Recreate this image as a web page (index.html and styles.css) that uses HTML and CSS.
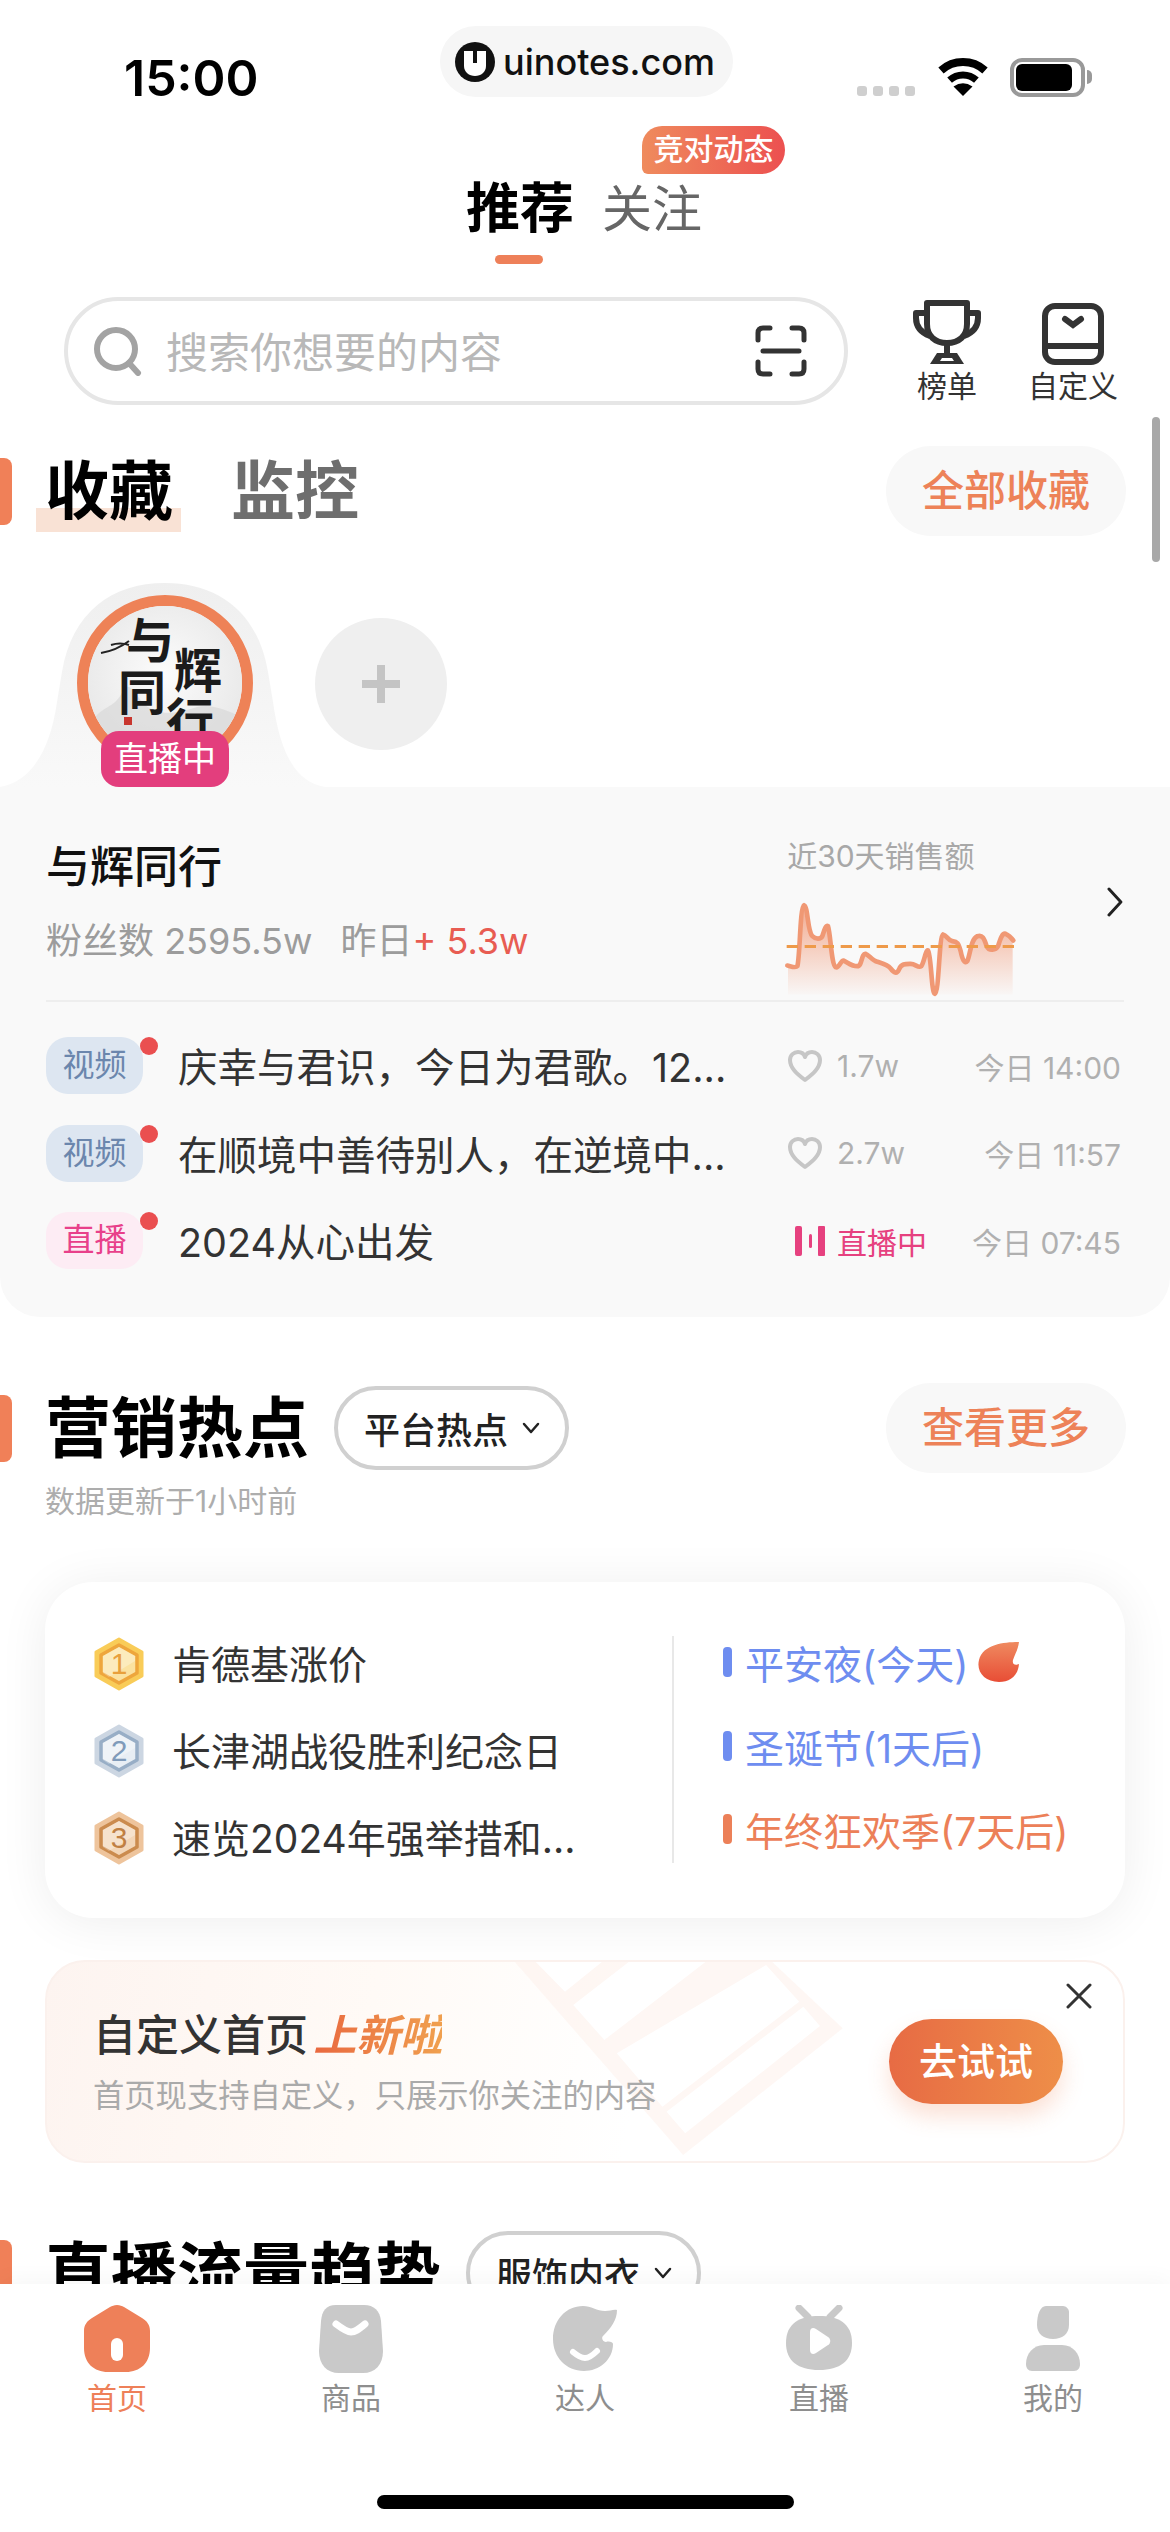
FILE: index.html
```html
<!DOCTYPE html>
<html lang="zh-CN">

<head>
    <meta charset="UTF-8">
    <meta name="viewport" content="width=device-width, initial-scale=1.0">
    <title>首页</title>
    <link rel="stylesheet" href="styles.css">
</head>

<body>
    <div class="app">
        <div class="main">
            <!-- 状态栏 -->
            <div class="status">
                <div class="time">15:00</div>
                <div class="watermark">
                    <svg class="wm-logo" viewBox="0 0 40 40">
                        <circle cx="20" cy="20" r="20" fill="#111" />
                        <path d="M9 9H31V24C31 30 26 34 20 34C14 34 9 30 9 24Z" fill="#fff" />
                        <path d="M18 9H22V21H18Z" fill="#111" />
                    </svg>
                    <span>uinotes.com</span>
                </div>
                <div class="status-right">
                    <div class="signal"><i></i><i></i><i></i><i></i></div>
                    <svg class="wifi" width="50" height="38" viewBox="0 0 50 38">
                        <path d="M3 12.5A33 33 0 0 1 47 12.5" fill="none" stroke="#000" stroke-width="8" />
                        <path d="M11.6 22.1A20 20 0 0 1 38.4 22.1" fill="none" stroke="#000" stroke-width="7" />
                        <path d="M25 38L15.5 28.500Q25 22 34.500 28.500Z" fill="#000" />
                    </svg>
                    <div class="battery"><i></i></div>
                    <div class="battery-tip"></div>
                </div>
            </div>

            <!-- 顶部tab -->
            <div class="tabs">
                <div class="tab active">推荐</div>
                <div class="tab">关注</div>
                <div class="tab-badge">竞对动态</div>
            </div>

            <!-- 搜索 -->
            <div class="search-row">
                <div class="search">
                    <svg width="50" height="50" viewBox="0 0 50 50" fill="none" stroke="#a3a3a3" stroke-width="6">
                        <circle cx="23" cy="23" r="19" />
                        <path d="M36 37L45 47" stroke-linecap="round" />
                    </svg>
                    <span class="placeholder">搜索你想要的内容</span>
                    <svg class="scan" width="52" height="52" viewBox="0 0 52 52" fill="none" stroke="#333" stroke-width="5" stroke-linecap="round">
                        <path d="M3 15V8Q3 3 8 3H15M37 3H44Q49 3 49 8V15M3 37V44Q3 49 8 49H15M37 49H44Q49 49 49 44V37M8 26H44" />
                    </svg>
                </div>
                <div class="tools">
                    <div class="tool">
                        <svg width="68" height="66" viewBox="0 0 68 66" fill="none" stroke="#333" stroke-width="6" stroke-linejoin="round">
                            <path d="M14 3H54V24C54 36 46 43 34 43C22 43 14 36 14 24Z" />
                            <path d="M14 13H3V18C3 27 9 33 17 36M54 13H65V18C65 27 59 33 51 36M34 43V53" />
                            <path d="M24 53H44L51 64H17Z" fill="#333" stroke="none" />
                            <path d="M29 58H39L41 61H27Z" fill="#fff" stroke="none" />
                        </svg>
                        <span>榜单</span>
                    </div>
                    <div class="tool">
                        <svg width="66" height="66" viewBox="0 0 66 66" fill="none" stroke="#333" stroke-width="6">
                            <rect x="5" y="6" width="56" height="56" rx="10" />
                            <path d="M5 46H61" />
                            <path d="M25 19L33 25L41 19" stroke-width="6" stroke-linecap="round" />
                        </svg>
                        <span>自定义</span>
                    </div>
                </div>
            </div>

            <!-- 收藏 -->
            <div class="sec-head sec-collect">
                <div class="mark"></div>
                <div class="title-on">收藏</div>
                <div class="title-off">监控</div>
                <div class="more">全部收藏</div>
            </div>
            <div class="scroll-bar"></div>

            <div class="avatars">
                <svg class="bell" width="330" height="210" viewBox="0 0 330 210">
                    <defs>
                        <linearGradient id="bellBg" x1="0" y1="0" x2="0" y2="1">
                            <stop offset="0" stop-color="#efefef" />
                            <stop offset="1" stop-color="#f9f9f9" />
                        </linearGradient>
                    </defs>
                    <path d="M0 210C30 205 50 175 57 125L62 95C72 35 112 6 165 6C218 6 258 35 268 95L273 125C280 175 295 205 325 210Z" fill="url(#bellBg)" />
                </svg>
                <div class="avatar">
                    <svg class="avatar-art" width="154" height="154" viewBox="11 11 154 154">
                        <defs>
                            <radialGradient id="artBg" cx="0.5" cy="0.45" r="0.6">
                                <stop offset="0" stop-color="#fcfcfc" />
                                <stop offset="1" stop-color="#e4e4e4" />
                            </radialGradient>
                        </defs>
                        <rect x="0" y="0" width="176" height="176" fill="url(#artBg)" />
                        <path d="M20 120C30 110 38 112 46 96C52 84 58 100 68 110C84 122 100 118 120 112C136 108 150 116 170 124V176H10V130Z" fill="#d9d9d9" opacity="0.7" />
                        <path d="M24 58C36 56 44 52 52 46M34 50C40 48 46 48 52 50" fill="none" stroke="#222" stroke-width="2" />
                        <text class="art-t" x="73" y="63" font-size="48">与</text>
                        <text class="art-t" x="121" y="93" font-size="48">辉</text>
                        <text class="art-t" x="65" y="115" font-size="48">同</text>
                        <text class="art-t" x="113" y="143" font-size="48">行</text>
                        <rect x="47" y="122" width="8" height="8" fill="#c8362e" />
                    </svg>
                    <div class="live-badge">直播中</div>
                </div>
                <div class="add">
                    <svg width="38" height="38" viewBox="0 0 38 38" fill="#c4c4c4">
                        <rect x="0" y="15" width="38" height="8" />
                        <rect x="15" y="0" width="8" height="38" />
                    </svg>
                </div>
            </div>

            <div class="fav-card">
                <div class="fav-top">
                    <div class="fav-left">
                        <div class="fav-name">与辉同行</div>
                        <div class="fav-sub">
                            <span>粉丝数 2595.5w</span>
                            <span class="yesterday">昨日<em>+ 5.3w</em></span>
                        </div>
                    </div>
                    <div class="fav-chart">
                        <div class="chart-label">近30天销售额</div>
                        <svg width="234" height="97" viewBox="80 210 702 290">
                            <defs>
                                <linearGradient id="areaBg" x1="0" y1="0" x2="0" y2="1">
                                    <stop offset="0" stop-color="#f19c7c" stop-opacity="0.85" />
                                    <stop offset="1" stop-color="#f19c7c" stop-opacity="0.03" />
                                </linearGradient>
                            </defs>
                            <path d="M92 403C100 405 115 412 120 405C128 380 128 225 140 222C152 225 150 300 165 315C175 325 190 325 195 315C200 300 205 280 212 285C220 310 222 400 235 408C245 412 250 388 258 388C270 392 280 405 300 405C315 405 312 365 325 368C335 372 345 388 360 392C375 397 390 400 400 412C410 425 418 430 425 415C432 397 445 398 460 398C475 398 482 412 492 405C500 395 505 355 512 358C522 370 522 490 533 488C545 485 545 315 557 310C568 312 572 328 585 330C600 332 603 335 610 360C615 385 622 400 630 390C640 365 640 325 660 315C675 310 680 320 688 345C695 360 715 358 722 345C730 320 735 305 745 308C755 312 762 320 766 328V490H92Z" fill="url(#areaBg)" />
                            <path d="M90 403C100 405 115 412 120 405C128 380 128 225 140 222C152 225 150 300 165 315C175 325 190 325 195 315C200 300 205 280 212 285C220 310 222 400 235 408C245 412 250 388 258 388C270 392 280 405 300 405C315 405 312 365 325 368C335 372 345 388 360 392C375 397 390 400 400 412C410 425 418 430 425 415C432 397 445 398 460 398C475 398 482 412 492 405C500 395 505 355 512 358C522 370 522 490 533 488C545 485 545 315 557 310C568 312 572 328 585 330C600 332 603 335 610 360C615 385 622 400 630 390C640 365 640 325 660 315C675 310 680 320 688 345C695 360 715 358 722 345C730 320 735 305 745 308C755 312 762 320 768 328" fill="none" stroke="#f09874" stroke-width="14" stroke-linecap="round" />
                            <path d="M88 346H772" fill="none" stroke="#ee9a4a" stroke-width="9" stroke-dasharray="34 20" />
                        </svg>
                    </div>
                    <svg class="chevron" width="18" height="30" viewBox="0 0 18 30" fill="none" stroke="#222" stroke-width="3" stroke-linecap="round" stroke-linejoin="round">
                        <path d="M3 2L15 15L3 28" />
                    </svg>
                </div>
                <div class="fav-list">
                    <div class="fav-row">
                        <div class="tag tag-video">视频</div>
                        <div class="row-title">庆幸与君识，今日为君歌。12...</div>
                        <div class="row-like">
                            <svg width="36" height="36" viewBox="0 0 36 36" fill="none" stroke="#c6c6c6" stroke-width="4" stroke-linejoin="round">
                                <path d="M18 32C10 26 3 20 3 12C3 7 7 4 11 4C14 4 17 6 18 9C19 6 22 4 25 4C29 4 33 7 33 12C33 20 26 26 18 32Z" />
                            </svg>
                            <span>1.7w</span>
                        </div>
                        <div class="row-time">今日 14:00</div>
                    </div>
                    <div class="fav-row">
                        <div class="tag tag-video">视频</div>
                        <div class="row-title">在顺境中善待别人，在逆境中...</div>
                        <div class="row-like">
                            <svg width="36" height="36" viewBox="0 0 36 36" fill="none" stroke="#c6c6c6" stroke-width="4" stroke-linejoin="round">
                                <path d="M18 32C10 26 3 20 3 12C3 7 7 4 11 4C14 4 17 6 18 9C19 6 22 4 25 4C29 4 33 7 33 12C33 20 26 26 18 32Z" />
                            </svg>
                            <span>2.7w</span>
                        </div>
                        <div class="row-time">今日 11:57</div>
                    </div>
                    <div class="fav-row">
                        <div class="tag tag-live">直播</div>
                        <div class="row-title">2024从心出发</div>
                        <div class="row-like row-live">
                            <svg width="30" height="30" viewBox="0 0 30 30" fill="#e6417f">
                                <rect x="0" y="0" width="7" height="30" rx="2" />
                                <rect x="14" y="8" width="3" height="14" rx="1.500" />
                                <rect x="23" y="0" width="7" height="30" rx="1" />
                            </svg>
                            <span>直播中</span>
                        </div>
                        <div class="row-time">今日 07:45</div>
                    </div>
                </div>
            </div>

            <!-- 营销热点 -->
            <div class="sec-head sec-hot">
                <div class="mark"></div>
                <div class="title-on plain">营销热点</div>
                <div class="drop">
                    <span>平台热点</span>
                    <svg width="18" height="12" viewBox="0 0 18 12" fill="none" stroke="#222" stroke-width="2.500" stroke-linecap="round" stroke-linejoin="round">
                        <path d="M2 2L9 10L16 2" />
                    </svg>
                </div>
                <div class="more">查看更多</div>
            </div>
            <div class="update-time">数据更新于1小时前</div>

            <div class="hot-card">
                <div class="hot-left">
                    <div class="hot-row">
                        <svg class="medal" width="50" height="54" viewBox="0 0 50 54">
                            <path d="M25 2L48 15V39L25 52L2 39V15Z" fill="#f9cc58" stroke="#f9cc58" stroke-width="3" stroke-linejoin="round" />
                            <path d="M25 8L43 18V36L25 46L7 36V18Z" fill="#fbe2a0" stroke="#eea63c" stroke-width="3.500" stroke-linejoin="round" />
                            <path d="M25 10L41 19V24L15 40L9 36V19Z" fill="#fff" opacity="0.3" />
                            <text x="25" y="37" fill="#e8a03c">1</text>
                        </svg>
                        <span>肯德基涨价</span>
                    </div>
                    <div class="hot-row">
                        <svg class="medal" width="50" height="54" viewBox="0 0 50 54">
                            <path d="M25 2L48 15V39L25 52L2 39V15Z" fill="#ccd6e2" stroke="#ccd6e2" stroke-width="3" stroke-linejoin="round" />
                            <path d="M25 8L43 18V36L25 46L7 36V18Z" fill="#e8eef4" stroke="#98aec6" stroke-width="3.500" stroke-linejoin="round" />
                            <path d="M25 10L41 19V24L15 40L9 36V19Z" fill="#fff" opacity="0.3" />
                            <text x="25" y="37" fill="#809bba">2</text>
                        </svg>
                        <span>长津湖战役胜利纪念日</span>
                    </div>
                    <div class="hot-row">
                        <svg class="medal" width="50" height="54" viewBox="0 0 50 54">
                            <path d="M25 2L48 15V39L25 52L2 39V15Z" fill="#eec49c" stroke="#eec49c" stroke-width="3" stroke-linejoin="round" />
                            <path d="M25 8L43 18V36L25 46L7 36V18Z" fill="#f3d6b8" stroke="#cb8b4e" stroke-width="3.500" stroke-linejoin="round" />
                            <path d="M25 10L41 19V24L15 40L9 36V19Z" fill="#fff" opacity="0.3" />
                            <text x="25" y="37" fill="#c07f42">3</text>
                        </svg>
                        <span>速览2024年强举措和...</span>
                    </div>
                </div>
                <div class="hot-line"></div>
                <div class="hot-right">
                    <div class="fest fest-blue"><i></i><span>平安夜(今天)</span>
                        <svg class="fire" width="42" height="40" viewBox="0 0 42 40">
                            <defs>
                                <linearGradient id="fireBg" x1="0" y1="0" x2="0" y2="1">
                                    <stop offset="0" stop-color="#ef8a60" />
                                    <stop offset="1" stop-color="#e84d35" />
                                </linearGradient>
                            </defs>
                            <path d="M42 0C28 0 6 2 2 18C-1 30 8 40 22 40C33 40 41 34 42 22C38 24 35 22 36 18C38 12 41 8 42 0Z" fill="url(#fireBg)" />
                        </svg>
                    </div>
                    <div class="fest fest-blue"><i></i><span>圣诞节(1天后)</span></div>
                    <div class="fest fest-orange"><i></i><span>年终狂欢季(7天后)</span></div>
                </div>
            </div>

            <div class="banner">
                <svg class="banner-deco" width="650" height="220" viewBox="0 0 1568 660" preserveAspectRatio="none">
                    <path d="M80 30L490 615L875 235L700 30Z" fill="#fdf1ec" opacity="0.6" />
                    <path d="M130 30H300L205 125Z" fill="#fff" />
                    <path d="M225 165L365 30H550L300 270Z" fill="#fff" />
                    <path d="M330 310L690 45L770 155L440 470Z" fill="#fff" />
                    <path d="M450 485L780 170L820 228L495 550Z" fill="#fff" />
                </svg>
                <div class="banner-text">
                    <div class="banner-title">自定义首页 <em>上新啦</em></div>
                    <div class="banner-sub">首页现支持自定义，只展示你关注的内容</div>
                </div>
                <div class="try-btn">去试试</div>
                <svg class="close" width="26" height="26" viewBox="0 0 26 26" fill="none" stroke="#333" stroke-width="3" stroke-linecap="round">
                    <path d="M2 2L24 24M24 2L2 24" />
                </svg>
            </div>

            <!-- 直播流量趋势 -->
            <div class="sec-head sec-trend">
                <div class="mark"></div>
                <div class="title-on plain">直播流量趋势</div>
                <div class="drop">
                    <span>服饰内衣</span>
                    <svg width="18" height="12" viewBox="0 0 18 12" fill="none" stroke="#222" stroke-width="2.500" stroke-linecap="round" stroke-linejoin="round">
                        <path d="M2 2L9 10L16 2" />
                    </svg>
                </div>
            </div>
        </div>

        <!-- 底部导航 -->
        <div class="tabbar">
            <div class="nav">
                <div class="nav-item active">
                    <svg width="66" height="68" viewBox="0 0 66 68">
                        <path d="M33 0C36 0 38 1 40 2L58 13C63 16 66 20 66 26V43C66 58 56 67 42 67H24C10 67 0 58 0 43V26C0 20 3 16 8 13L26 2C28 1 30 0 33 0Z" fill="#ee8059" />
                        <rect x="27" y="33" width="12" height="23" rx="6" fill="#fff" />
                    </svg>
                    <span>首页</span>
                </div>
                <div class="nav-item">
                    <svg width="66" height="68" viewBox="0 0 66 68">
                        <path d="M18 0H46C56 0 62 6 63 16L65 46C65 60 57 68 45 68H21C9 68 1 60 1 46L3 16C4 6 8 0 18 0Z" fill="#c9c9c9" />
                        <path d="M18 19C26 25 30 27 33 27C37 27 40 25 47 19" fill="none" stroke="#fff" stroke-width="7" stroke-linecap="round" />
                    </svg>
                    <span>商品</span>
                </div>
                <div class="nav-item">
                    <svg width="66" height="68" viewBox="0 0 66 68">
                        <path d="M31 1C39 1 45 6 53 6C58 6 62 4 65 5C65 15 59 23 51 31C49 33 51 37 54 37C57 36 61 37 61 39C61 55 47 66 32 66C14 66 1 52 1 34C1 15 14 1 31 1Z" fill="#c9c9c9" />
                        <path d="M21 47C27 52 30 53 33 53C37 53 40 51 45 46" fill="none" stroke="#fff" stroke-width="6" stroke-linecap="round" />
                    </svg>
                    <span>达人</span>
                </div>
                <div class="nav-item">
                    <svg width="66" height="68" viewBox="0 0 66 68">
                        <path d="M13 3L22 12M53 3L44 12" fill="none" stroke="#c9c9c9" stroke-width="7" stroke-linecap="round" />
                        <path d="M33 11C52 11 66 18 66 38C66 56 54 65 33 65C12 65 0 56 0 38C0 18 14 11 33 11Z" fill="#c9c9c9" />
                        <path d="M24 27C24 23 27 22 30 24L42 32C45 34 45 38 42 40L30 48C27 50 24 49 24 45Z" fill="#fff" />
                    </svg>
                    <span>直播</span>
                </div>
                <div class="nav-item">
                    <svg width="56" height="68" viewBox="0 0 56 68">
                        <path d="M21 1H38C41 1 44 4 44 7V20C44 29 37 34 28 34C19 34 12 29 12 20C12 10 15 1 21 1Z" fill="#c9c9c9" />
                        <path d="M19 40H37C48 40 55 49 55 59C55 63 53 66 49 66H7C3 66 1 63 1 59C1 49 8 40 19 40Z" fill="#c9c9c9" />
                    </svg>
                    <span>我的</span>
                </div>
            </div>
            <div class="home-bar"></div>
        </div>
    </div>
</body>

</html>
```

FILE: styles.css
```css
* {
    margin: 0;
    padding: 0;
    box-sizing: border-box;
}

body {
    font-family: Inter, "Noto Sans CJK SC", sans-serif;
    color: #222;
    background: #fff;
}

em,
i {
    font-style: normal;
}

.app {
    position: relative;
    width: 1170px;
    height: 2532px;
    display: flex;
    flex-direction: column;
    overflow: hidden;
}

.main {
    height: 2284px;
    overflow: hidden;
    flex-shrink: 0;
}

/* status */
.status {
    position: relative;
    height: 126px;
    display: flex;
    padding: 49px 78px 0 124px;
}

.time {
    font-size: 50px;
    line-height: 58px;
    font-weight: 600;
    color: #000;
}

.watermark {
    position: absolute;
    left: 440px;
    top: 26px;
    width: 293px;
    height: 71px;
    border-radius: 36px;
    background: #f6f6f6;
    display: flex;
    align-items: center;
    padding-left: 15px;
    gap: 8px;
    font-size: 36px;
    font-weight: 500;
    color: #111;
}

.wm-logo {
    width: 40px;
    height: 40px;
}

.status-right {
    margin-left: auto;
    height: 39px;
    margin-top: 9px;
    display: flex;
    align-items: flex-start;
}

.signal {
    display: flex;
    gap: 6px;
    margin-top: 28px;
}

.signal i {
    width: 10px;
    height: 10px;
    border-radius: 3px;
    background: #cfcfcf;
}

.wifi {
    margin-left: 23px;
}

.battery {
    width: 75px;
    height: 39px;
    margin-left: 22px;
    border: 4px solid #999;
    border-radius: 12px;
    padding: 2px;
}

.battery i {
    display: block;
    width: 56px;
    height: 27px;
    border-radius: 6px;
    background: #000;
}

.battery-tip {
    width: 5px;
    height: 14px;
    margin: 12px 0 0 2px;
    border-radius: 0 6px 6px 0;
    background: #999;
}

/* tabs */
.tabs {
    position: relative;
    height: 171px;
    display: flex;
    align-items: flex-start;
    gap: 28px;
    padding: 52px 0 0 466px;
}

.tab {
    font-size: 50px;
    line-height: 62px;
    color: #666;
}

.tab.active {
    position: relative;
    font-size: 54px;
    font-weight: 700;
    color: #000;
}

.tab.active::after {
    content: "";
    position: absolute;
    left: 29px;
    top: 77px;
    width: 48px;
    height: 9px;
    border-radius: 5px;
    background: #ee8059;
}

.tab-badge {
    position: absolute;
    left: 642px;
    top: 0;
    width: 143px;
    height: 48px;
    border-radius: 20px 24px 24px 6px;
    background: linear-gradient(90deg, #ef8b5d, #ec5050);
    color: #fff;
    font-size: 30px;
    font-weight: 500;
    line-height: 46px;
    text-align: center;
}

/* search */
.search-row {
    display: flex;
    padding-left: 64px;
}

.search {
    width: 784px;
    height: 108px;
    border: 4px solid #e6e6e6;
    border-radius: 54px;
    display: flex;
    align-items: center;
    padding-left: 25px;
}

.placeholder {
    margin: 0 0 3px 23px;
    font-size: 42px;
    color: #b8b8b8;
}

.scan {
    margin-left: auto;
    margin-right: 37px;
}

.tools {
    display: flex;
    margin-left: 65px;
    gap: 47px;
    margin-top: 3px;
}

.tool {
    display: flex;
    flex-direction: column;
    align-items: center;
    font-size: 30px;
    line-height: 36px;
    color: #333;
}

.tool svg {
    margin-bottom: 2px;
}

/* section head */
.sec-head {
    display: flex;
    align-items: center;
    height: 90px;
    padding-right: 44px;
}

.sec-collect {
    margin-top: 41px;
}

.sec-hot {
    margin-top: 66px;
}

.sec-trend {
    margin-top: 65px;
}

.mark {
    width: 12px;
    height: 67px;
    margin-right: 33px;
    border-radius: 0 8px 8px 0;
    background: #f08058;
}

.title-on {
    position: relative;
    z-index: 0;
    font-size: 64px;
    line-height: 80px;
    font-weight: 700;
    color: #000;
}

.title-on.plain {
    font-size: 66px;
    font-weight: 700;
}

.title-on:not(.plain)::before {
    content: "";
    position: absolute;
    z-index: -1;
    left: -9px;
    right: -8px;
    bottom: -1px;
    height: 24px;
    background: #f9e2d5;
}

.title-off {
    margin-left: 58px;
    font-size: 64px;
    line-height: 80px;
    font-weight: 700;
    color: #6e6e6e;
}

.more {
    margin-left: auto;
    width: 240px;
    height: 90px;
    border-radius: 45px;
    background: #f8f8f8;
    color: #ed8258;
    font-size: 42px;
    font-weight: 500;
    line-height: 90px;
    text-align: center;
}

.scroll-bar {
    position: absolute;
    left: 1152px;
    top: 417px;
    width: 8px;
    height: 145px;
    border-radius: 4px;
    background: #a8a8a8;
}

/* avatars */
.avatars {
    position: relative;
    z-index: 0;
    height: 251px;
    display: flex;
    padding: 59px 0 0 77px;
}

.bell {
    position: absolute;
    z-index: -1;
    left: 0;
    bottom: 0;
}

.avatar {
    position: relative;
    width: 176px;
    height: 176px;
    border: 11px solid #ee8257;
    border-radius: 50%;
}

.avatar-art {
    display: block;
    border-radius: 50%;
}

.art-t {
    font-family: "Noto Sans CJK SC", sans-serif;
    font-weight: 700;
    text-anchor: middle;
    fill: #1b1b1b;
}

.live-badge {
    position: absolute;
    left: 13px;
    top: 125px;
    width: 128px;
    height: 56px;
    border-radius: 18px;
    background: #e33e7d;
    color: #fff;
    font-size: 34px;
    line-height: 56px;
    text-align: center;
}

.add {
    width: 132px;
    height: 132px;
    margin: 23px 0 0 62px;
    border-radius: 50%;
    background: #efefef;
    display: flex;
    align-items: center;
    justify-content: center;
}

/* favorite card */
.fav-card {
    background: #f9f9f9;
    border-radius: 0 0 40px 40px;
    padding: 0 46px 48px;
}

.fav-top {
    height: 215px;
    display: flex;
    border-bottom: 2px solid #eee;
}

.fav-left {
    width: 744px;
    padding-top: 58px;
}

.fav-name {
    font-size: 44px;
    line-height: 44px;
    font-weight: 500;
    color: #111;
}

.fav-sub {
    margin-top: 32px;
    font-size: 36px;
    line-height: 40px;
    color: #9c9c9c;
}

.yesterday {
    margin-left: 18px;
}

.yesterday em {
    color: #e85c52;
}

.fav-chart {
    width: 234px;
    padding-top: 54px;
}

.chart-label {
    margin-left: 3px;
    font-size: 30px;
    line-height: 30px;
    color: #a8a8a8;
}

.fav-chart svg {
    display: block;
    margin-top: 30px;
}

.chevron {
    margin: 100px 0 0 88px;
}

.fav-list {
    padding-top: 35px;
    display: flex;
    flex-direction: column;
    gap: 30.5px;
}

.fav-row {
    display: flex;
    align-items: center;
    height: 57px;
}

.tag {
    position: relative;
    width: 97px;
    height: 57px;
    border-radius: 22px;
    font-size: 32px;
    line-height: 55px;
    text-align: center;
}

.tag::after {
    content: "";
    position: absolute;
    left: 94px;
    top: 0;
    width: 18px;
    height: 18px;
    border-radius: 50%;
    background: #ea4f50;
}

.tag-video {
    background: #dde6f1;
    color: #6b86ad;
}

.tag-live {
    background: #fdecf4;
    color: #e8408a;
}

.row-title {
    width: 544px;
    margin: 0 0 2px 35px;
    font-size: 39.5px;
    color: #333;
    white-space: nowrap;
}

.row-like {
    display: flex;
    align-items: center;
    gap: 14px;
    margin-left: 65px;
    font-size: 30px;
    color: #b0b0b0;
}

.row-live {
    margin-left: 73px;
    gap: 12px;
    color: #e6417f;
    font-size: 30px;
}

.row-time {
    margin-left: auto;
    margin-right: 3px;
    font-size: 30px;
    color: #b0b0b0;
}

/* hot */
.update-time {
    margin: 13px 0 0 45px;
    font-size: 30px;
    line-height: 30px;
    color: #adadad;
}

.hot-card {
    width: 1080px;
    height: 336px;
    margin: 66px 0 0 45px;
    padding: 54px 0 0 49px;
    border-radius: 48px;
    background: #fff;
    box-shadow: 0 4px 50px rgba(0, 0, 0, 0.07);
    display: flex;
}

.hot-left {
    width: 578px;
    padding-top: 1px;
    display: flex;
    flex-direction: column;
    gap: 33px;
}

.hot-row {
    display: flex;
    align-items: center;
    height: 54px;
    gap: 28px;
    font-size: 39px;
    color: #333;
    white-space: nowrap;
}

.hot-row span {
    margin-bottom: 4px;
}

.medal text {
    font-family: "Liberation Sans", sans-serif;
    font-size: 30px;
    text-anchor: middle;
}

.hot-line {
    width: 2px;
    height: 227px;
    background: #e8e8e8;
}

.hot-right {
    margin-left: 49px;
    padding-top: 2px;
    display: flex;
    flex-direction: column;
    gap: 35.5px;
}

.fest {
    display: flex;
    align-items: center;
    height: 48px;
    font-size: 39px;
    white-space: nowrap;
}

.fest i {
    width: 9px;
    height: 30px;
    margin-right: 13px;
    border-radius: 4px;
}

.fest-blue {
    color: #6e8df0;
}

.fest-blue i {
    background: #6e8df0;
}

.fest-orange {
    color: #ec8058;
}

.fest-orange i {
    background: #ec8058;
}

.fire {
    margin-left: 9px;
}

/* banner */
.banner {
    position: relative;
    width: 1080px;
    height: 203px;
    margin: 42px 0 0 45px;
    border: 2px solid #fbf1ed;
    border-radius: 40px;
    background: linear-gradient(100deg, #fdf4f0 0%, #fffaf6 30%, #fff 55%);
    overflow: hidden;
    display: flex;
    align-items: flex-start;
}

.banner-deco {
    position: absolute;
    left: 433px;
    top: -12px;
}

.banner-text {
    position: relative;
    padding: 49px 0 0 46px;
}

.banner-title {
    font-size: 43px;
    line-height: 48px;
    font-weight: 500;
    color: #333;
}

.banner-title em {
    margin-left: -6px;
    font-style: italic;
    font-weight: 700;
    color: transparent;
    background: linear-gradient(90deg, #e9683f, #f0a04f);
    -webkit-background-clip: text;
    background-clip: text;
}

.banner-sub {
    margin-top: 18px;
    font-size: 31.3px;
    line-height: 38px;
    color: #aaa;
    white-space: nowrap;
}

.try-btn {
    position: relative;
    width: 174px;
    height: 85px;
    margin: 57px 60px 0 auto;
    border-radius: 43px;
    background: linear-gradient(90deg, #e76b44, #ee8e48);
    box-shadow: 0 12px 22px rgba(236, 120, 70, 0.22);
    color: #fff;
    font-size: 38px;
    font-weight: 500;
    line-height: 85px;
    text-align: center;
}

.close {
    position: absolute;
    right: 31px;
    top: 21px;
}

.drop {
    width: 235px;
    height: 84px;
    margin-left: 25px;
    border: 4px solid #d0d0d0;
    border-radius: 42px;
    display: flex;
    align-items: center;
    padding-left: 26px;
    gap: 14px;
    font-size: 36px;
    font-weight: 500;
    color: #222;
    background: #fff;
}

/* bottom nav */
.tabbar {
    position: relative;
    flex: 1;
    background: #fff;
    box-shadow: 0 -6px 20px rgba(0, 0, 0, 0.03);
}

.nav {
    display: grid;
    grid-template-columns: repeat(5, 1fr);
    padding-top: 21px;
}

.nav-item {
    display: flex;
    flex-direction: column;
    align-items: center;
    font-size: 30px;
    line-height: 30px;
    color: #8e8e8e;
}

.nav-item.active {
    color: #ee8059;
}

.nav-item svg {
    display: block;
    margin-bottom: 10px;
}

.home-bar {
    width: 417px;
    height: 14px;
    margin: 82px auto 0;
    border-radius: 7px;
    background: #000;
}
```
